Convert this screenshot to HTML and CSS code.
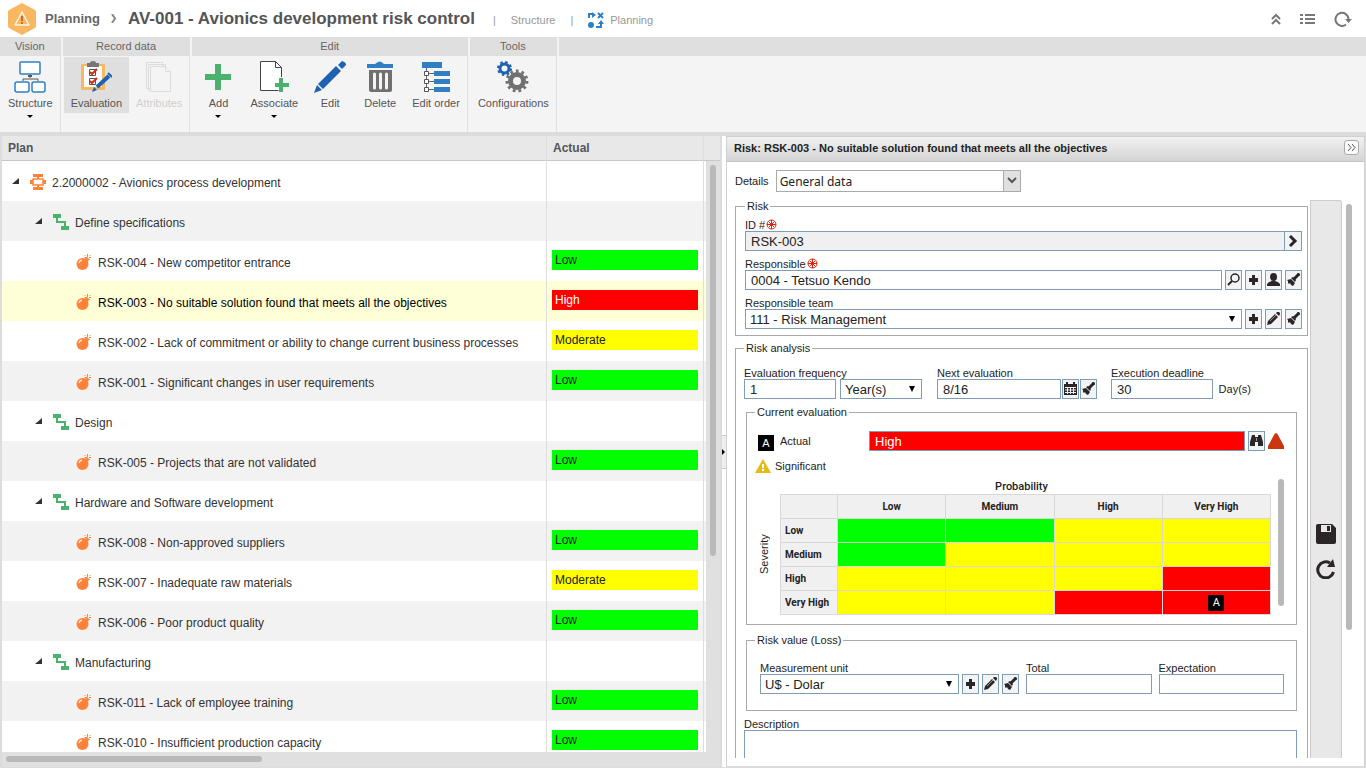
FILE: index.html
```
<!DOCTYPE html>
<html lang="en">
<head>
    <meta charset="UTF-8">
    <meta name="viewport" content="width=device-width, initial-scale=1.0">
    <title>AV-001 - Avionics development risk control</title>
    <link rel="stylesheet" href="styles.css">
</head>
<body>
    <!-- Shared icons -->
    <svg class="sprite" width="0" height="0" aria-hidden="true">
        <symbol id="i-bomb" viewBox="0 0 16 17">
            <circle cx="6.500" cy="10" r="6" fill="#ff8238"/>
            <path d="M8 3l4 5 1-3-2-2z" fill="#ff8238"/>
            <path d="M3 9a4 4 0 0 1 3-3" stroke="#ffe6d0" stroke-width="1.500" fill="none"/>
            <path d="M9 3.500h2M11.500 3V0M13 3.500h2M13.500 1.500h1M13 5.500h1M8.500 1.500h1" stroke="#ff8238"/>
        </symbol>
        <symbol id="i-flow" viewBox="0 0 16 17">
            <path d="M0 0h8v4H0zM8 12h8v4H8z" fill="#4bb16f"/>
            <path d="M4 4v4h8v4" fill="none" stroke="#4bb16f" stroke-width="2"/>
        </symbol>
        <symbol id="i-process" viewBox="0 0 16 17">
            <path d="M3 0h10v3H3zM3 13h10v3H3zM0 6h3v4H0zM13 6h3v4h-3z" fill="#ff8238"/>
            <path d="M8 3v2M8 11v2" stroke="#ff8238" stroke-width="2"/>
            <path d="M3 5h10v6H3z" fill="#fff" stroke="#ff8238" stroke-width="1.500"/>
        </symbol>
        <symbol id="i-plus" viewBox="0 0 15 18">
            <path d="M6 4h3v3h3v4H9v3H6v-3H3V7h3z" fill="#2b2527"/>
        </symbol>
        <symbol id="i-search" viewBox="0 0 15 18">
            <circle cx="9" cy="7" r="4" fill="none" stroke="#2b2527" stroke-width="1.500"/>
            <path d="M6 10l-4 4" stroke="#2b2527" stroke-width="2"/>
        </symbol>
        <symbol id="i-user" viewBox="0 0 15 18">
            <ellipse cx="7.500" cy="6" rx="3.500" ry="4" fill="#2b2527"/>
            <path d="M1 15v-2q1-2 5-3h3q4 1 5 3v2z" fill="#2b2527"/>
        </symbol>
        <symbol id="i-brush" viewBox="0 0 15 18">
            <path d="M1 9l4-1 4 4-2 3-2-1-1-2-1 1-1-1v-2z" fill="#2b2527"/>
            <path d="M5 7l2-1 3 3-1 2z" fill="#2b2527"/>
            <path d="M8 8l5-5" stroke="#2b2527" stroke-width="3"/>
            <circle cx="12.500" cy="3.500" r="1.500" fill="#2b2527"/>
        </symbol>
        <symbol id="i-pencil" viewBox="0 0 15 18">
            <path d="M1 15l1-4 7-7 3 3-7 7zM10 3l1-1h2l1 1v1l-1 2z" fill="#2b2527"/>
            <path d="M4 11l6-6" stroke="#999"/>
        </symbol>
        <symbol id="i-calendar" viewBox="0 0 15 18">
            <path d="M1 4h13v11H1zM3 2h2v3H3zM10 2h2v3h-2z" fill="#2b2527"/>
            <path d="M2 7.500h11M2 10h11M2 12.500h11M4.500 7v7M7.500 7v7M10.500 7v7" stroke="#eee"/>
        </symbol>
        <symbol id="i-binoc" viewBox="0 0 15 18">
            <path d="M3 3h3v2h3V3h3l2 7v4H9v-4H6v4H1v-4z" fill="#2b2527"/>
            <path d="M7.500 6v3" stroke="#999"/>
        </symbol>
        <symbol id="i-required" viewBox="0 0 11 11">
            <circle cx="5.500" cy="5.500" r="4.500" fill="#fff" stroke="#e2230b"/>
            <path d="M5.500 1v9M1 5.500h9M3 3l5 5M8 3L3 8" stroke="#e2230b"/>
        </symbol>
        <symbol id="i-caret" viewBox="0 0 7 7">
            <path d="M7 0v6H0z" fill="#333"/>
        </symbol>
    </svg>

    <!-- Page header -->
    <header class="topbar">
        <svg class="logo" width="30" height="34" viewBox="0 0 30 34">
            <path d="M15 1l13 7q1 1 1 2v14q0 1-1 2l-13 7-13-7q-1-1-1-2V10q0-1 1-2z" fill="#f8b761"/>
            <path d="M15 10l7 13H8z" fill="none" stroke="#fff3df" stroke-width="1.500" stroke-linejoin="round"/>
            <path d="M15 14v5M15 20v2" stroke="#bd6f35" stroke-width="2"/>
        </svg>
        <a class="crumb" href="#">Planning</a>
        <svg class="crumb-arrow" width="6" height="9" viewBox="0 0 6 9"><path d="M1 0l3 4.500L1 9" fill="none" stroke="#888" stroke-width="2"/></svg>
        <h1>AV-001 - Avionics development risk control</h1>
        <nav class="views">
            <span>|</span>
            <a href="#">Structure</a>
            <span>|</span>
            <a href="#">
                <svg width="16" height="16" viewBox="0 0 16 16">
                    <path d="M1 6V2h4" fill="none" stroke="#2f7fc2" stroke-width="2"/><path d="M4 0l4 3-4 3z" fill="#2f7fc2"/>
                    <path d="M10 1l5 5M15 1l-5 5" stroke="#2f7fc2" stroke-width="2"/>
                    <circle cx="3" cy="13" r="3" fill="#2f7fc2"/>
                    <path d="M8 15h5v-4" fill="none" stroke="#2f7fc2" stroke-width="2"/><path d="M10 12l3-4 3 4z" fill="#2f7fc2"/>
                </svg>
                Planning
            </a>
        </nav>
        <div class="top-actions">
            <button type="button" aria-label="Collapse">
                <svg width="10" height="12" viewBox="0 0 10 12"><path d="M1 6l4-4 4 4M1 11l4-4 4 4" fill="none" stroke="#777" stroke-width="2"/></svg>
            </button>
            <button type="button" aria-label="List">
                <svg width="15" height="10" viewBox="0 0 15 10"><path d="M0 1h3M0 5h3M0 9h3M5 1h10M5 5h10M5 9h10" stroke="#777" stroke-width="2"/></svg>
            </button>
            <button type="button" aria-label="Refresh">
                <svg width="18" height="16" viewBox="0 0 18 16"><path d="M12 13.500A6.500 6.500 0 1 1 14.500 8" fill="none" stroke="#777" stroke-width="2"/><path d="M11 8h7l-3.500 4z" fill="#777"/></svg>
            </button>
        </div>
    </header>

    <!-- Ribbon -->
    <div class="ribbon">
        <section class="group">
            <h2>Vision</h2>
            <div class="tools">
                <button type="button" class="tool">
                    <svg width="32" height="32" viewBox="0 0 32 32">
                        <path d="M16 14v3M9 20v-2h15v2" fill="none" stroke="#555"/>
                        <path d="M14 14h4v2h-4z" fill="#555"/>
                        <g fill="#fff" stroke="#2f7fc2" stroke-width="1.500"><rect x="6" y="1" width="20" height="12" rx="1"/><rect x="1" y="21" width="14" height="10" rx="2"/><rect x="18" y="21" width="13" height="10" rx="2"/></g>
                    </svg>
                    Structure
                    <i class="drop"></i>
                </button>
            </div>
        </section>
        <section class="group">
            <h2>Record data</h2>
            <div class="tools">
                <button type="button" class="tool active">
                    <svg width="32" height="32" viewBox="0 0 32 32">
                        <rect x="1" y="3" width="24" height="26" rx="1" fill="#f8b761"/>
                        <path d="M4 5h18v21H4z" fill="#fff"/>
                        <path d="M7 2h3q0-2 3-2t3 2h3v4H7z" fill="#777"/>
                        <g fill="none" stroke="#555"><path d="M9.500 8.500h6v6h-6zM9.500 17.500h6v6h-6z"/></g>
                        <path d="M10 11l2 2 5-5M10 20l2 2 5-5" fill="none" stroke="#d42a0a" stroke-width="2"/>
                        <path d="M12 31l2-5 3 3z" fill="#1f62b3"/>
                        <path d="M17 26L29 15" stroke="#1f62b3" stroke-width="4"/>
                        <path d="M28 12l4 4" stroke="#1f62b3" stroke-width="2"/>
                    </svg>
                    Evaluation
                </button>
                <button type="button" class="tool" disabled>
                    <svg width="32" height="32" viewBox="0 0 32 32">
                        <g fill="#f4f4f4" stroke="#dcdcdc"><path d="M3.500 1.500h16v26h-16zM5.500 3.500h17v26h-17z"/><path d="M7.500 5.500h15l5 5v20h-20z"/><path d="M22.500 5.500v5h5"/></g>
                    </svg>
                    Attributes
                </button>
            </div>
        </section>
        <section class="group">
            <h2>Edit</h2>
            <div class="tools">
                <button type="button" class="tool">
                    <svg width="32" height="32" viewBox="0 0 32 32"><path d="M13 3h6v10h10v6H19v10h-6V19H3v-6h10z" fill="#4bb16f"/></svg>
                    Add
                    <i class="drop"></i>
                </button>
                <button type="button" class="tool">
                    <svg width="32" height="32" viewBox="0 0 32 32">
                        <path d="M2.500.500h16l5 6v23h-21z" fill="#fff"/>
                        <path d="M23.500 16V6.500l-6-6h-15v29h18M17.500.500v6h6" fill="none" stroke="#444"/>
                        <path d="M21 17h4v5h6v4h-6v5h-4v-5h-4v-4h4z" fill="#4bb16f"/>
                    </svg>
                    Associate
                    <i class="drop"></i>
                </button>
                <button type="button" class="tool">
                    <svg width="32" height="32" viewBox="0 0 32 32">
                        <path d="M0 32l3-8 5 5zM4 23L22 5l5 5L9 28zM24 4l4-4q4 1 4 4l-4 4z" fill="#1f62b3"/>
                    </svg>
                    Edit
                </button>
                <button type="button" class="tool">
                    <svg width="32" height="32" viewBox="0 0 32 32">
                        <path d="M3 3h8q5-5 9 0h9v4H3z" fill="#2f7fc2"/>
                        <path d="M5 9h23v20q0 2-2 2H7q-2 0-2-2z" fill="#707070"/>
                        <path d="M10.500 13v14M16.500 13v14M22.500 13v14" stroke="#f4f4f4" stroke-width="3" stroke-linecap="round"/>
                    </svg>
                    Delete
                </button>
                <button type="button" class="tool">
                    <svg width="32" height="32" viewBox="0 0 32 32">
                        <path d="M2 1h20v6H2zM14 10h16v5H14zM14 18h16v5H14zM14 26h16v5H14z" fill="#2f7fc2"/>
                        <path d="M6.500 7v20M8 12.500h6M8 20.500h6M8 28.500h6" stroke="#666" fill="none"/>
                        <g fill="#fff" stroke="#555"><path d="M4.500 10.500h4v4h-4zM4.500 18.500h4v4h-4zM4.500 26.500h4v4h-4z"/></g>
                    </svg>
                    Edit order
                </button>
            </div>
        </section>
        <section class="group">
            <h2>Tools</h2>
            <div class="tools">
                <button type="button" class="tool">
                    <svg width="32" height="32" viewBox="0 0 32 32">
                        <circle cx="7.500" cy="7.500" r="4.500" fill="none" stroke="#1f62b3" stroke-width="3"/>
                        <circle cx="7.500" cy="7.500" r="6.500" fill="none" stroke="#1f62b3" stroke-width="2" stroke-dasharray="2.500 2.600"/>
                        <circle cx="20" cy="20" r="6.500" fill="none" stroke="#707070" stroke-width="5"/>
                        <circle cx="20" cy="20" r="10" fill="none" stroke="#707070" stroke-width="3" stroke-dasharray="2.700 3.010"/>
                    </svg>
                    Configurations
                </button>
            </div>
        </section>
        <section class="group rest">
            <h2></h2>
        </section>
    </div>

    <main class="workspace">
        <!-- Plan tree -->
        <section class="plan">
            <div class="plan-view">
                <table class="tree">
                    <colgroup><col><col class="col-actual"><col class="col-end"></colgroup>
                    <thead>
                        <tr><th>Plan</th><th>Actual</th><th></th></tr>
                    </thead>
                    <tbody>
                        <tr><td><div class="node"><svg class="caret"><use href="#i-caret"/></svg><svg class="icon"><use href="#i-process"/></svg>2.2000002 - Avionics process development</div></td><td></td><td></td></tr>
                        <tr><td><div class="node level-2"><svg class="caret"><use href="#i-caret"/></svg><svg class="icon"><use href="#i-flow"/></svg>Define specifications</div></td><td></td><td></td></tr>
                        <tr><td><div class="node level-3"><svg class="icon"><use href="#i-bomb"/></svg>RSK-004 - New competitor entrance</div></td><td><div class="rate low">Low</div></td><td></td></tr>
                        <tr class="selected"><td><div class="node level-3"><svg class="icon"><use href="#i-bomb"/></svg>RSK-003 - No suitable solution found that meets all the objectives</div></td><td><div class="rate high">High</div></td><td></td></tr>
                        <tr><td><div class="node level-3"><svg class="icon"><use href="#i-bomb"/></svg>RSK-002 - Lack of commitment or ability to change current business processes</div></td><td><div class="rate moderate">Moderate</div></td><td></td></tr>
                        <tr><td><div class="node level-3"><svg class="icon"><use href="#i-bomb"/></svg>RSK-001 - Significant changes in user requirements</div></td><td><div class="rate low">Low</div></td><td></td></tr>
                        <tr><td><div class="node level-2"><svg class="caret"><use href="#i-caret"/></svg><svg class="icon"><use href="#i-flow"/></svg>Design</div></td><td></td><td></td></tr>
                        <tr><td><div class="node level-3"><svg class="icon"><use href="#i-bomb"/></svg>RSK-005 - Projects that are not validated</div></td><td><div class="rate low">Low</div></td><td></td></tr>
                        <tr><td><div class="node level-2"><svg class="caret"><use href="#i-caret"/></svg><svg class="icon"><use href="#i-flow"/></svg>Hardware and Software development</div></td><td></td><td></td></tr>
                        <tr><td><div class="node level-3"><svg class="icon"><use href="#i-bomb"/></svg>RSK-008 - Non-approved suppliers</div></td><td><div class="rate low">Low</div></td><td></td></tr>
                        <tr><td><div class="node level-3"><svg class="icon"><use href="#i-bomb"/></svg>RSK-007 - Inadequate raw materials</div></td><td><div class="rate moderate">Moderate</div></td><td></td></tr>
                        <tr><td><div class="node level-3"><svg class="icon"><use href="#i-bomb"/></svg>RSK-006 - Poor product quality</div></td><td><div class="rate low">Low</div></td><td></td></tr>
                        <tr><td><div class="node level-2"><svg class="caret"><use href="#i-caret"/></svg><svg class="icon"><use href="#i-flow"/></svg>Manufacturing</div></td><td></td><td></td></tr>
                        <tr><td><div class="node level-3"><svg class="icon"><use href="#i-bomb"/></svg>RSK-011 - Lack of employee training</div></td><td><div class="rate low">Low</div></td><td></td></tr>
                        <tr><td><div class="node level-3"><svg class="icon"><use href="#i-bomb"/></svg>RSK-010 - Insufficient production capacity</div></td><td><div class="rate low">Low</div></td><td></td></tr>
                    </tbody>
                </table>
                <div class="scroll-y"><div class="thumb"></div></div>
            </div>
            <div class="scroll-x"><div class="thumb"></div></div>
        </section>

        <div class="splitter"><button type="button" aria-label="Toggle panel"></button></div>

        <!-- Risk details -->
        <section class="detail">
            <div class="detail-head">
                <h2>Risk: RSK-003 - No suitable solution found that meets all the objectives</h2>
                <button type="button" aria-label="Hide">
                    <svg width="9" height="7" viewBox="0 0 9 7"><path d="M1 0l3 3.500L1 7M5 0l3 3.500L5 7" fill="none" stroke="#555"/></svg>
                </button>
            </div>
            <div class="detail-select">
                <label for="details">Details</label>
                <select id="details"><option>General data</option></select>
            </div>
            <div class="detail-body">
                <form class="form">
                    <fieldset>
                        <legend>Risk</legend>
                        <label for="risk-id">ID #<svg class="req"><use href="#i-required"/></svg></label>
                        <div class="line joined">
                            <input id="risk-id" class="grow readonly" type="text" value="RSK-003" readonly>
                            <button type="button" class="btn" aria-label="Open"><svg viewBox="0 0 15 18"><path d="M5 4l5 5-5 5" fill="none" stroke="#2b2527" stroke-width="3"/></svg></button>
                        </div>
                        <label for="responsible">Responsible <svg class="req"><use href="#i-required"/></svg></label>
                        <div class="line">
                            <input id="responsible" class="grow" type="text" value="0004 - Tetsuo Kendo">
                            <button type="button" class="btn" aria-label="Search"><svg><use href="#i-search"/></svg></button>
                            <button type="button" class="btn" aria-label="Add"><svg><use href="#i-plus"/></svg></button>
                            <button type="button" class="btn" aria-label="User"><svg><use href="#i-user"/></svg></button>
                            <button type="button" class="btn" aria-label="Clear"><svg><use href="#i-brush"/></svg></button>
                        </div>
                        <label for="team">Responsible team</label>
                        <div class="line">
                            <select id="team" class="grow"><option>111 - Risk Management</option></select>
                            <button type="button" class="btn" aria-label="Add"><svg><use href="#i-plus"/></svg></button>
                            <button type="button" class="btn" aria-label="Edit"><svg><use href="#i-pencil"/></svg></button>
                            <button type="button" class="btn" aria-label="Clear"><svg><use href="#i-brush"/></svg></button>
                        </div>
                    </fieldset>

                    <fieldset class="analysis">
                        <legend>Risk analysis</legend>
                        <div class="fields">
                            <div class="field frequency">
                                <label for="frequency">Evaluation frequency</label>
                                <div class="line">
                                    <input id="frequency" class="grow" type="text" value="1">
                                    <select class="period" aria-label="Period"><option>Year(s)</option></select>
                                </div>
                            </div>
                            <div class="field next">
                                <label for="next">Next evaluation</label>
                                <div class="line">
                                    <input id="next" class="grow" type="text" value="8/16">
                                    <button type="button" class="btn" aria-label="Calendar"><svg><use href="#i-calendar"/></svg></button>
                                    <button type="button" class="btn" aria-label="Clear"><svg><use href="#i-brush"/></svg></button>
                                </div>
                            </div>
                            <div class="field deadline">
                                <label for="deadline">Execution deadline</label>
                                <div class="line">
                                    <input id="deadline" class="grow" type="text" value="30">
                                    <span class="unit">Day(s)</span>
                                </div>
                            </div>
                        </div>

                        <fieldset class="current">
                            <legend>Current evaluation</legend>
                            <div class="line actual">
                                <label for="actual"><b class="mark">A</b>Actual</label>
                                <input id="actual" class="grow high" type="text" value="High" readonly>
                                <button type="button" class="btn" aria-label="View"><svg><use href="#i-binoc"/></svg></button>
                                <svg class="rise" width="16" height="16" viewBox="0 0 16 16"><path d="M6 2q2-4 4 0l6 11v3H0v-3z" fill="#cb3610"/></svg>
                            </div>
                            <div class="significant">
                                <svg width="16" height="14" viewBox="0 0 16 14"><path d="M8 0l8 14H0z" fill="#e4bb12"/><path d="M8 5v4M8 10v2" stroke="#fff" stroke-width="2"/></svg>
                                Significant
                            </div>
                            <div class="matrix-box">
                                <span class="axis-y">Severity</span>
                                <div class="matrix-main">
                                    <div class="axis-x">Probability</div>
                                    <table class="matrix">
                                        <tr><th></th><th>Low</th><th>Medium</th><th>High</th><th>Very High</th></tr>
                                        <tr><th>Low</th><td class="low"></td><td class="low"></td><td class="moderate"></td><td class="moderate"></td></tr>
                                        <tr><th>Medium</th><td class="low"></td><td class="moderate"></td><td class="moderate"></td><td class="moderate"></td></tr>
                                        <tr><th>High</th><td class="moderate"></td><td class="moderate"></td><td class="moderate"></td><td class="high"></td></tr>
                                        <tr><th>Very High</th><td class="moderate"></td><td class="moderate"></td><td class="high"></td><td class="high"><b class="mark">A</b></td></tr>
                                    </table>
                                </div>
                                <div class="thumb"></div>
                            </div>
                        </fieldset>

                        <fieldset class="loss">
                            <legend>Risk value (Loss)</legend>
                            <div class="fields">
                                <div class="field measure">
                                    <label for="measure">Measurement unit</label>
                                    <div class="line">
                                        <select id="measure" class="grow"><option>U$ - Dolar</option></select>
                                        <button type="button" class="btn" aria-label="Add"><svg><use href="#i-plus"/></svg></button>
                                        <button type="button" class="btn" aria-label="Edit"><svg><use href="#i-pencil"/></svg></button>
                                        <button type="button" class="btn" aria-label="Clear"><svg><use href="#i-brush"/></svg></button>
                                    </div>
                                </div>
                                <div class="field">
                                    <label for="total">Total</label>
                                    <div class="line"><input id="total" class="grow" type="text"></div>
                                </div>
                                <div class="field">
                                    <label for="expectation">Expectation</label>
                                    <div class="line"><input id="expectation" class="grow" type="text"></div>
                                </div>
                            </div>
                        </fieldset>

                        <label for="description">Description</label>
                        <textarea id="description" rows="5"></textarea>
                    </fieldset>
                </form>
                <div class="side">
                    <button type="button" aria-label="Save">
                        <svg width="20" height="20" viewBox="0 0 20 20"><path d="M2 0h14l4 4v14q0 2-2 2H2q-2 0-2-2V2q0-2 2-2z" fill="#2b2527"/><path d="M5 1h10v7H5z" fill="#e8e8e8"/><path d="M11 2h3v5h-3z" fill="#2b2527"/></svg>
                    </button>
                    <button type="button" aria-label="Reload">
                        <svg width="20" height="20" viewBox="0 0 20 20"><path d="M17.500 13A8 8 0 1 1 14 4" fill="none" stroke="#2b2527" stroke-width="3"/><path d="M17 0l2 8h-8z" fill="#2b2527"/></svg>
                    </button>
                </div>
                <div class="thumb"></div>
            </div>
        </section>
    </main>
</body>
</html>
```
FILE: styles.css
```
* {
    box-sizing: border-box;
    margin: 0;
    padding: 0;
}

body {
    font-family: "Liberation Sans", Arial, sans-serif;
    font-size: 11px;
    color: #222;
    background-color: #dcdcdc;
    height: 100vh;
    display: flex;
    flex-direction: column;
    overflow: hidden;
}

button {
    font: inherit;
    color: inherit;
    background: none;
    border: none;
}

svg {
    display: block;
    flex: none;
}

.sprite {
    position: absolute;
}

a {
    color: inherit;
    text-decoration: none;
}

.low {
    background-color: #00ff00;
}

.moderate {
    background-color: #ffff00;
}

.high {
    background-color: #ff0000;
    color: #fff;
}

.thumb {
    background-color: #b9b9b9;
    border-radius: 3px;
}

/* Header */
.topbar {
    height: 37px;
    flex: none;
    display: flex;
    align-items: center;
    background-color: #fff;
    padding: 0 14px 0 7px;
    color: #555;
}

.crumb {
    font-size: 13px;
    font-weight: bold;
    color: #666;
    margin-left: 8px;
}

.crumb-arrow {
    margin: 0 11px;
}

h1 {
    font-size: 17px;
    font-weight: bold;
    white-space: nowrap;
}

.views {
    display: flex;
    align-items: center;
    gap: 15px;
    margin-left: 18px;
    padding-top: 3px;
    color: #999;
}

.views a {
    display: flex;
    align-items: center;
    gap: 6px;
}

.top-actions {
    display: flex;
    align-items: center;
    gap: 19px;
    margin-left: auto;
}

/* Ribbon */
.ribbon {
    display: flex;
    flex: none;
    height: 95px;
    background-color: #f4f4f4;
}

.group {
    display: flex;
    flex-direction: column;
    border-right: 1px solid #e0e0e0;
}

.group h2 {
    height: 19px;
    line-height: 19px;
    font-size: 11px;
    font-weight: normal;
    text-align: center;
    color: #666;
    background-color: #dfdfdf;
}

.group + .group h2 {
    border-left: 2px solid #f4f4f4;
}

.group.rest {
    flex: 1;
    border: none;
}

.tools {
    display: flex;
    align-items: flex-start;
    padding: 1px 0 0 1px;
}

.group + .group .tools {
    padding-left: 3px;
}

.tool {
    display: flex;
    flex-direction: column;
    align-items: center;
    min-width: 50px;
    height: 56px;
    padding: 4px 7px 0;
    color: #555;
    line-height: 20px;
}

.tool.active {
    background-color: #dfdfdf;
}

.tool:disabled {
    color: #d0d0d0;
}

.drop {
    border: 3px solid transparent;
    border-top-color: #000;
    border-bottom: none;
    margin-top: 2px;
}

/* Workspace */
.workspace {
    flex: 1;
    min-height: 0;
    display: flex;
    padding: 4px 1px 1px 2px;
}

.plan {
    flex: 1 1 718px;
    min-width: 0;
    display: flex;
    flex-direction: column;
    background-color: #e0e0e0;
}

.plan-view {
    flex: 1;
    min-height: 0;
    overflow: hidden;
    position: relative;
}

.tree {
    width: 100%;
    table-layout: fixed;
    border-collapse: separate;
    border-spacing: 0;
    background-color: #fff;
    font-size: 12px;
}

.col-actual {
    width: 157px;
}

.col-end {
    width: 17px;
}

.tree th {
    height: 25px;
    padding: 0 6px;
    text-align: left;
    color: #555;
    background-color: #e8e8e8;
    border-bottom: 1px solid #c8c8c8;
}

.tree td {
    height: 40px;
}

.tree th + th,
.tree td + td {
    border-left: 1px solid #dedede;
}

.tree tbody tr:nth-child(even) {
    background-color: #f2f2f2;
}

.tree tbody tr.selected {
    background-color: #ffffd7;
    color: #000;
}

.node {
    display: flex;
    align-items: center;
    padding: 3px 0 0 10px;
    white-space: nowrap;
    color: #333;
}

.selected .node {
    color: #000;
}

.level-2 {
    padding-left: 33px;
}

.level-3 {
    padding-left: 74px;
}

.caret {
    width: 7px;
    height: 7px;
    margin: 0 11px 2px 0;
}

.icon {
    width: 16px;
    height: 17px;
    margin-right: 6px;
}

.rate {
    height: 20px;
    line-height: 20px;
    margin: 0 5px 2px;
    padding-left: 3px;
}

.scroll-y {
    position: absolute;
    top: 25px;
    right: 0;
    bottom: 0;
    width: 14px;
    padding: 4px;
    background-color: #e0e0e0;
}

.scroll-y .thumb {
    height: 67%;
}

.scroll-x {
    padding: 4px;
    height: 15px;
}

.scroll-x .thumb {
    width: 36%;
    height: 6px;
}

.splitter {
    width: 6px;
    flex: none;
    display: flex;
    align-items: center;
    background-color: #fff;
    border-left: 2px solid #dcdcdc;
}

.splitter button {
    width: 4px;
    height: 34px;
    background-color: #eee;
    border: solid #ccc;
    border-width: 1px 0;
}

.splitter button::after {
    content: "";
    display: block;
    border: 3px solid transparent;
    border-left-color: #000;
    border-right: none;
}

/* Detail panel */
.detail {
    flex: 1 1 639px;
    min-width: 0;
    display: flex;
    flex-direction: column;
    background-color: #fff;
    border: 1px solid #d0d0d0;
    border-bottom-color: #dcdcdc;
    padding-bottom: 8px;
}

.detail-head {
    flex: none;
    display: flex;
    align-items: center;
    justify-content: space-between;
    height: 25px;
    padding: 0 5px 3px 7px;
    background-image: linear-gradient(#f2f2f2, #d4d4d4);
    border-bottom: 1px solid #c4c4c4;
}

.detail-head h2 {
    font-size: 11px;
    font-weight: bold;
}

.detail-head button {
    width: 15px;
    height: 15px;
    display: flex;
    align-items: center;
    justify-content: center;
    background-color: #fafafa;
    border: 1px solid #aaa;
    border-radius: 3px;
}

.detail-select {
    display: flex;
    align-items: center;
    gap: 7px;
    padding: 8px;
}

.detail-body {
    flex: 1;
    min-height: 0;
    display: flex;
    padding-left: 8px;
    overflow: hidden;
}

.form {
    flex: 1;
    min-width: 0;
}

.side {
    width: 32px;
    margin-left: 2px;
    display: flex;
    flex-direction: column;
    align-items: center;
    justify-content: center;
    gap: 15px;
    padding-top: 144px;
    background-color: #e8e8e8;
    border: 1px solid #ccc;
    border-bottom: none;
    border-radius: 0 3px 0 0;
}

.detail-body > .thumb {
    width: 6px;
    height: 426px;
    margin: 4px 12px 0 4px;
}

/* Form */
fieldset {
    min-width: 0;
    border: 1px solid #aaa;
    padding: 5px 5px 6px 9px;
    margin-bottom: 6px;
}

legend {
    line-height: 13px;
    padding: 0 2px;
}

label {
    display: flex;
    align-items: center;
    height: 13px;
    white-space: nowrap;
}

.req {
    width: 11px;
    height: 11px;
    margin-left: 1px;
}

.line {
    display: flex;
    align-items: center;
    gap: 3px;
}

.line + label {
    margin-top: 6px;
}

.joined {
    gap: 0;
}

.joined .btn {
    border-left: none;
}

.grow {
    flex: 1;
    min-width: 0;
}

input,
select,
textarea {
    height: 20px;
    font-family: inherit;
    font-size: 13px;
    color: #222;
    background-color: #fff;
    border: 1px solid #7f9db9;
    border-radius: 0;
    padding: 0 5px;
    outline: none;
}

select {
    appearance: none;
    padding: 0 20px 0 4px;
    background-image: url("data:image/svg+xml,%3Csvg xmlns='http://www.w3.org/2000/svg' width='6' height='6'%3E%3Cpath d='M0 0h6L3 6z'/%3E%3C/svg%3E");
    background-repeat: no-repeat;
    background-position: right 6px center;
}

#details {
    width: 245px;
    height: 22px;
    padding-left: 3px;
    font-family: "Noto Sans", sans-serif;
    font-size: 12px;
    border-color: #aaa;
    background-image: url("data:image/svg+xml,%3Csvg xmlns='http://www.w3.org/2000/svg' width='17' height='20'%3E%3Cpath d='M0 0h17v20H0z' fill='%23e0e0e0'/%3E%3Cpath d='M.5 0v20' stroke='%23aaa'/%3E%3Cpath d='M5 7l4 4 4-4' fill='none' stroke='%23555' stroke-width='2'/%3E%3C/svg%3E");
    background-position: right center;
}

.readonly {
    background-color: #f0f0f0;
}

.btn {
    width: 17px;
    height: 20px;
    flex: none;
    background-color: #f1f3f4;
    border: 1px solid #7f9db9;
}

.btn svg {
    width: 15px;
    height: 18px;
}

.analysis {
    padding: 11px 10px 6px 8px;
}

.fields {
    display: flex;
    align-items: flex-start;
}

.frequency {
    width: 178px;
}

.frequency .line {
    gap: 4px;
}

.period {
    width: 82px;
}

.next {
    width: 160px;
    margin: 0 14px 0 15px;
}

.next .line {
    gap: 1px;
}

.deadline {
    width: 140px;
}

.deadline .line {
    gap: 6px;
}

.current {
    margin: 7px 0 9px 2px;
    padding: 12px 12px 9px 8px;
}

.actual label {
    width: 21%;
    height: 20px;
    padding-left: 3px;
}

.mark {
    display: inline-flex;
    align-items: center;
    justify-content: center;
    width: 16px;
    height: 16px;
    background-color: #000;
    color: #fff;
    font-weight: normal;
}

.actual .mark {
    align-self: flex-end;
    margin-right: 6px;
}

input.high {
    background-color: #ff0000;
    color: #fff;
}

.significant {
    display: flex;
    align-items: center;
    gap: 4px;
    margin-top: 8px;
    line-height: 14px;
}

.matrix-box {
    display: flex;
    margin-top: 6px;
}

/* Padding is in unrotated terms, so the bottom one pushes the text down */
.axis-y {
    display: flex;
    align-items: center;
    justify-content: center;
    width: 25px;
    padding: 0 0 14px 8px;
    line-height: 16px;
    writing-mode: vertical-rl;
    transform: rotate(180deg);
}

.matrix-main {
    flex: 1;
}

.axis-x {
    line-height: 15px;
    padding-right: 8px;
    text-align: center;
    font-family: Roboto, sans-serif;
    font-weight: 500;
}

.matrix {
    width: 100%;
    table-layout: fixed;
    border-collapse: collapse;
    font-family: Roboto, sans-serif;
    font-size: 10px;
}

.matrix th,
.matrix td {
    height: 24px;
    border: 1px solid #ddd6d6;
    text-align: center;
}

.matrix th {
    font-weight: bold;
    background-color: #f0f0f0;
}

.matrix th:first-child {
    width: 57px;
    padding-left: 4px;
    text-align: left;
}

.matrix .mark {
    vertical-align: middle;
    font-size: 11px;
}

.matrix-box .thumb {
    width: 6px;
    margin: 0 0 9px 7px;
}

.loss {
    margin: 0 0 6px 2px;
    padding: 14px 12px 16px 13px;
}

.loss legend {
    margin-left: -5px;
}

.loss .fields {
    gap: 7px;
}

.loss .field {
    flex: 1;
    min-width: 0;
}

.loss .measure {
    flex: 2 1 8px;
}

textarea {
    display: block;
    width: 100%;
    height: auto;
    resize: none;
}
```
